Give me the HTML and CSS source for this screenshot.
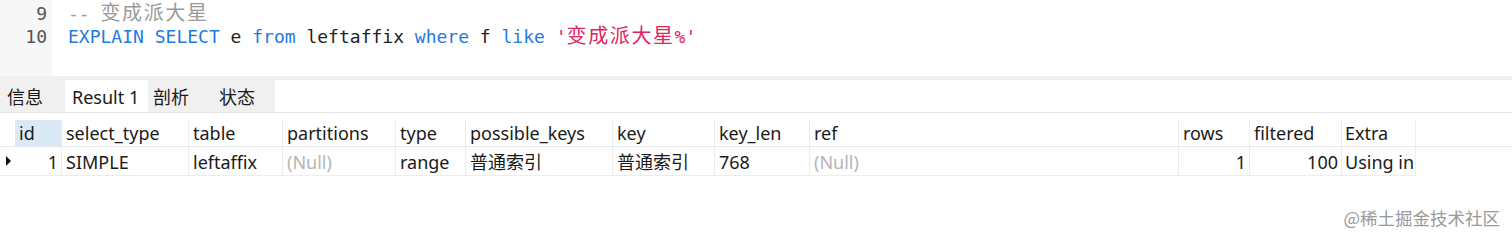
FILE: index.html
```html
<!DOCTYPE html>
<html>
<head>
<meta charset="utf-8">
<link rel="stylesheet" href="styles.css">
</head>
<body>
<div class="editor">
  <div class="gutter">
    <div class="ln">9</div>
    <div class="ln">10</div>
  </div>
  <div class="code">
    <div class="line cm">-- <span class="cjk">变成派大星</span></div>
    <div class="line"><span class="kw">EXPLAIN</span> <span class="kw">SELECT</span> e <span class="kw">from</span> leftaffix <span class="kw">where</span> f <span class="kw">like</span> <span class="str">'<span class="cjk">变成派大星</span>%'</span></div>
  </div>
</div>
<div class="sep"></div>
<div class="tabs">
  <div class="tab">信息</div>
  <div class="tab active">Result 1</div>
  <div class="tab">剖析</div>
  <div class="tab">状态</div>
</div>
<div class="grid">
  <div class="row head">
    <div class="ind"></div>
    <div class="c c1 sel">id</div>
    <div class="c c2">select_type</div>
    <div class="c c3">table</div>
    <div class="c c4">partitions</div>
    <div class="c c5">type</div>
    <div class="c c6">possible_keys</div>
    <div class="c c7">key</div>
    <div class="c c8">key_len</div>
    <div class="c c9">ref</div>
    <div class="c c10">rows</div>
    <div class="c c11">filtered</div>
    <div class="c c12">Extra</div>
  </div>
  <div class="row data">
    <div class="ind"><span class="tri"></span></div>
    <div class="c c1 num">1</div>
    <div class="c c2">SIMPLE</div>
    <div class="c c3">leftaffix</div>
    <div class="c c4 null">(Null)</div>
    <div class="c c5">range</div>
    <div class="c c6">普通索引</div>
    <div class="c c7">普通索引</div>
    <div class="c c8">768</div>
    <div class="c c9 null">(Null)</div>
    <div class="c c10 num">1</div>
    <div class="c c11 num">100</div>
    <div class="c c12">Using in</div>
  </div>
</div>
<div class="mark">@稀土掘金技术社区</div>
</body>
</html>
```
FILE: styles.css
```css
html, body {
  margin: 0;
  padding: 0;
  background: #ffffff;
  width: 1512px;
  height: 239px;
  overflow: hidden;
  font-family: "Noto Sans", "Noto Sans CJK SC", sans-serif;
  color: #1a1a1a;
}
.editor {
  height: 76px;
  display: flex;
  font-family: "DejaVu Sans Mono", "Noto Sans CJK SC", monospace;
  font-size: 18px;
}
.gutter {
  width: 52px;
  background: #f7f7f7;
  padding-top: 2px;
  box-sizing: border-box;
}
.ln {
  height: 23px;
  line-height: 23px;
  text-align: right;
  padding-right: 5px;
  color: #555555;
}
.code {
  padding-left: 16px;
  padding-top: 2px;
}
.line {
  height: 23px;
  line-height: 23px;
  white-space: pre;
  color: #222222;
}
.cm { color: #9a9a9a; }
.kw { color: #1f7ae0; }
.str { color: #e0245e; }
.cjk { font-size: 20px; letter-spacing: 1.6px; line-height: 20px; }
.sep {
  height: 4px;
  background: #f0f0f0;
}
.tabs {
  display: flex;
  height: 33px;
  border-bottom: 1px solid #e6e6e6;
  box-sizing: border-box;
  font-size: 18px;
}
.tab {
  background: #f0f0f0;
  height: 32px;
  line-height: 34px;
  padding: 0 7px;
  box-sizing: border-box;
  white-space: nowrap;
}
.tab:nth-child(1) { width: 65px; }
.tab.active { background: #ffffff; width: 83px; }
.tab:nth-child(3) { width: 64px; padding-left: 5px; }
.tab:nth-child(4) { width: 63px; }
.grid {
  margin-top: 7px;
  font-size: 18px;
}
.row {
  display: flex;
}
.head { height: 27px; line-height: 27px; border-bottom: 1px solid #e8e8e8; box-sizing: border-box; }
.data { height: 29px; line-height: 30px; border-bottom: 1px solid #ededed; box-sizing: border-box; width: 1416px; }
.ind {
  width: 15px;
  position: relative;
}
.tri {
  position: absolute;
  left: 6px;
  top: 9px;
  width: 0;
  height: 0;
  border-top: 5px solid transparent;
  border-bottom: 5px solid transparent;
  border-left: 5px solid #111;
}
.c {
  box-sizing: border-box;
  padding-left: 4px;
  border-right: 1px solid #ececec;
  white-space: nowrap;
  overflow: hidden;
}
.sel { background: #dbe8f6; }
.num { text-align: right; padding-right: 3px; padding-left: 0; }
.null { color: #b5b5b5; }
.c1 { width: 47px; }
.c2 { width: 127px; }
.c3 { width: 94px; }
.c4 { width: 113px; }
.c5 { width: 70px; }
.c6 { width: 147px; }
.c7 { width: 102px; }
.c8 { width: 95px; }
.c9 { width: 369px; }
.c10 { width: 71px; }
.c11 { width: 92px; }
.c12 { width: 74px; padding-left: 3px; }
.mark {
  position: absolute;
  right: 12px;
  top: 205px;
  font-size: 17.5px;
  color: #9a9a9a;
  font-family: "Noto Sans CJK SC", sans-serif;
}
```
